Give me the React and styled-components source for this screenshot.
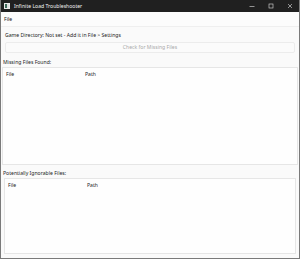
import React from 'react'
import styled, { createGlobalStyle } from 'styled-components'

const Global = createGlobalStyle`
    html, body {
        margin: 0;
        padding: 0;
        background: #ffffff;
    }
    * {
        box-sizing: border-box;
    }
`

const Window = styled.div`
    width: 300px;
    height: 259px;
    display: flex;
    flex-direction: column;
    background: #fafafa;
    border: 1px solid #7a7a7a;
    border-top: none;
    font-family: "Noto Sans", "Open Sans", sans-serif;
    font-size: 5.1px;
    color: #222222;
    overflow: hidden;
`

const TitleBar = styled.div`
    height: 12px;
    margin: 0 -1px;
    background: #202020;
    display: flex;
    align-items: center;
    color: #ffffff;
`

const AppIcon = styled.div`
    width: 6px;
    height: 6px;
    margin-left: 4px;
    border: 1px solid #e8e8e8;
    background: linear-gradient(90deg, #3f6b5a 0 40%, #dcdcdc 40% 100%);
`

const Title = styled.span`
    margin-left: 4px;
    flex: 1;
    font-size: 5.1px;
    line-height: 12px;
    color: #f2f2f2;
`

const Controls = styled.div`
    display: flex;
    height: 100%;
    padding-right: 1px;
`

const Control = styled.div`
    width: 19px;
    height: 100%;
    display: grid;
    place-items: center;
`

const MenuBar = styled.div`
    height: 15px;
    display: flex;
    align-items: center;
    padding-left: 3px;
    background: #fcfcfc;
    border-bottom: 1px solid #efefef;
    color: #111;
`

const Label = styled.div`
    height: 8px;
    line-height: 8px;
    margin-top: ${p => p.$top}px;
    padding-left: ${p => p.$left}px;
    white-space: nowrap;
`

const Button = styled.button`
    height: 11px;
    margin: 3px 4px 0 4px;
    padding: 0;
    border: 1px solid #ececec;
    border-radius: 2px;
    background: #fbfbfb;
    color: #a8a8a8;
    font-family: inherit;
    font-size: 5.1px;
    line-height: 9px;
`

const Table = styled.div`
    height: ${p => p.$height}px;
    margin: 1px ${p => p.$side}px 0 ${p => p.$side}px;
    background: #fefefe;
    border: 1px solid #e6e6e6;
`

const HeaderRow = styled.div`
    display: grid;
    grid-template-columns: 79px 1fr;
    padding: 2px 0 0 3px;
    height: 10px;
    line-height: 8px;
`

const FileTable = ({ height, side }) => (
    <Table $height={height} $side={side}>
        <HeaderRow>
            <span>File</span>
            <span>Path</span>
        </HeaderRow>
    </Table>
)

const App = () => {
    return (
        <>
            <Global />
            <Window>
                <TitleBar>
                    <AppIcon />
                    <Title>Infinite Load Troubleshooter</Title>
                    <Controls>
                        <Control>
                            <svg width="6" height="6" viewBox="0 0 6 6">
                                <path d="M0.5 3.5H5.5" stroke="#e0e0e0" strokeWidth="0.6" />
                            </svg>
                        </Control>
                        <Control>
                            <svg width="6" height="6" viewBox="0 0 6 6">
                                <rect x="1" y="1" width="4" height="4" fill="none" stroke="#e0e0e0" strokeWidth="0.6" />
                            </svg>
                        </Control>
                        <Control>
                            <svg width="6" height="6" viewBox="0 0 6 6">
                                <path d="M1 1L5 5M5 1L1 5" stroke="#e0e0e0" strokeWidth="0.6" />
                            </svg>
                        </Control>
                    </Controls>
                </TitleBar>
                <MenuBar>File</MenuBar>
                <Label $top={4} $left={4}>Game Directory: Not set - Add it in File &gt; Settings</Label>
                <Button disabled>Check for Missing Files</Button>
                <Label $top={5} $left={2}>Missing Files Found:</Label>
                <FileTable height={98} side={1} />
                <Label $top={4} $left={2}>Potentially Ignorable Files:</Label>
                <FileTable height={76} side={3} />
            </Window>
        </>
    )
}

export default App
